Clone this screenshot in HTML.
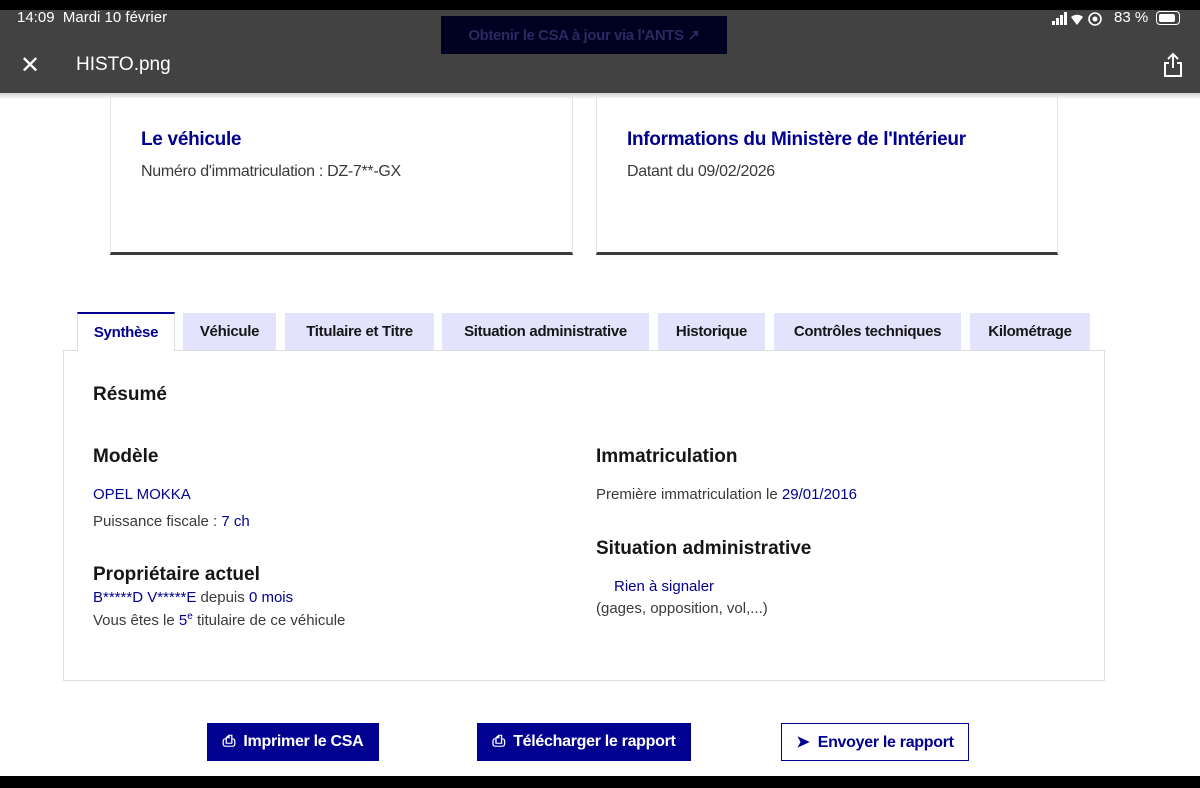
<!DOCTYPE html>
<html><head><meta charset="utf-8"><style>
*{margin:0;padding:0;box-sizing:border-box}
body{width:1200px;height:788px;position:relative;background:#fff;font-family:"Liberation Sans",sans-serif;overflow:hidden;color:#3a3a3a}
.a{position:absolute;white-space:nowrap}
.blue{color:#000091}
.h{font-weight:bold;color:#161616;font-size:19px}
.tab{position:absolute;top:313px;height:37px;background:#e3e3fd;color:#161616;font-weight:bold;font-size:15px;display:flex;align-items:center;justify-content:center;letter-spacing:-0.3px}
.btn{position:absolute;top:723px;height:38px;display:flex;align-items:center;justify-content:center;font-size:16px;font-weight:bold;letter-spacing:-0.3px}
</style></head><body>
<div class="a" style="left:0;top:0;width:1200px;height:10px;background:#000"></div>
<div class="a" style="left:0;top:10px;width:1200px;height:83px;background:#424242"></div>
<div class="a" style="left:0;top:93px;width:1200px;height:6px;background:linear-gradient(#cfcfcf,#fff)"></div>
<div class="a" style="left:17px;top:9px;color:#fff;font-size:15px">14:09&nbsp;&nbsp;Mardi 10 février</div>
<svg class="a" style="left:1052px;top:12px" width="60" height="14" viewBox="0 0 60 14" fill="#fff"><rect x="0" y="9" width="3" height="4"/><rect x="4" y="6" width="3" height="7"/><rect x="8" y="3" width="3" height="10"/><rect x="12" y="0" width="3" height="13"/><path d="M19 5a9 9 0 0 1 12 0l-6 8z"/><circle cx="43" cy="7" r="6" fill="none" stroke="#fff" stroke-width="1.6"/><circle cx="43" cy="7" r="2.5"/></svg>
<div class="a" style="left:1114px;top:9px;color:#fff;font-size:15px">83 %</div>
<div class="a" style="left:1156px;top:11px;width:24px;height:14px;border:1.5px solid #fff;border-radius:4px"><div style="margin:1.5px;width:16px;height:8px;background:#fff;border-radius:2px"></div></div>
<div class="a" style="left:441px;top:16px;width:286px;height:38px;background:#000020;color:#2a2a60;font-size:15px;font-weight:bold;display:flex;align-items:center;justify-content:center;letter-spacing:-0.4px">Obtenir le CSA à jour via l'ANTS ↗</div>
<div class="a" style="left:20px;top:51px;color:#fff;font-size:24px">✕</div>
<div class="a" style="left:76px;top:54px;color:#fff;font-size:19px">HISTO.png</div>
<svg class="a" style="left:1162px;top:52px" width="22" height="26" viewBox="0 0 22 26" fill="none" stroke="#fff" stroke-width="2"><path d="M11 2v14M6 7l5-5 5 5M7 11H3v13h16V11h-4"/></svg>

<div class="a" style="left:110px;top:96px;width:463px;height:159px;border:1px solid #e5e5e5;border-bottom:3px solid #3a3a3a"></div>
<div class="a" style="left:596px;top:96px;width:462px;height:159px;border:1px solid #e5e5e5;border-bottom:3px solid #3a3a3a"></div>
<div class="a blue" style="left:141px;top:129px;font-size:19px;font-weight:bold;letter-spacing:-0.3px">Le véhicule</div>
<div class="a" style="left:141px;top:163px;font-size:16px;letter-spacing:-0.3px">Numéro d'immatriculation : DZ-7**-GX</div>
<div class="a blue" style="left:627px;top:129px;font-size:19px;font-weight:bold;letter-spacing:-0.3px">Informations du Ministère de l'Intérieur</div>
<div class="a" style="left:627px;top:163px;font-size:16px;letter-spacing:-0.3px">Datant du 09/02/2026</div>

<div class="a" style="left:63px;top:350px;width:1042px;height:331px;border:1px solid #ddd"></div>
<div class="tab" style="left:77px;top:312px;height:39px;width:98px;background:#fff;color:#000091;border-top:2px solid #000091;border-left:1px solid #ddd;border-right:1px solid #ddd">Synthèse</div>
<div class="tab" style="left:183px;width:93px">Véhicule</div>
<div class="tab" style="left:285px;width:149px">Titulaire et Titre</div>
<div class="tab" style="left:442px;width:207px">Situation administrative</div>
<div class="tab" style="left:658px;width:107px">Historique</div>
<div class="tab" style="left:774px;width:187px">Contrôles techniques</div>
<div class="tab" style="left:970px;width:120px">Kilométrage</div>

<div class="a h" style="left:93px;top:384px">Résumé</div>
<div class="a h" style="left:93px;top:446px">Modèle</div>
<div class="a blue" style="left:93px;top:486px;font-size:15px">OPEL MOKKA</div>
<div class="a" style="left:93px;top:513px;font-size:15px">Puissance fiscale : <span class="blue">7 ch</span></div>
<div class="a h" style="left:93px;top:564px">Propriétaire actuel</div>
<div class="a" style="left:93px;top:589px;font-size:15px"><span class="blue">B*****D V*****E</span> depuis <span class="blue">0 mois</span></div>
<div class="a" style="left:93px;top:611px;font-size:15px">Vous êtes le <span class="blue">5<sup style="font-size:10px">e</sup></span> titulaire de ce véhicule</div>

<div class="a h" style="left:596px;top:446px">Immatriculation</div>
<div class="a" style="left:596px;top:486px;font-size:15px">Première immatriculation le <span class="blue">29/01/2016</span></div>
<div class="a h" style="left:596px;top:538px">Situation administrative</div>
<div class="a blue" style="left:614px;top:578px;font-size:15px">Rien à signaler</div>
<div class="a" style="left:596px;top:600px;font-size:15px">(gages, opposition, vol,...)</div>

<div class="btn" style="left:207px;width:172px;background:#000091;color:#fff">⎙&nbsp; Imprimer le CSA</div>
<div class="btn" style="left:477px;width:214px;background:#000091;color:#fff">⎙&nbsp; Télécharger le rapport</div>
<div class="btn" style="left:781px;width:188px;border:1px solid #000091;color:#000091">➤&nbsp; Envoyer le rapport</div>
<div class="a" style="left:0;top:776px;width:1200px;height:12px;background:#000"></div>
</body></html>
